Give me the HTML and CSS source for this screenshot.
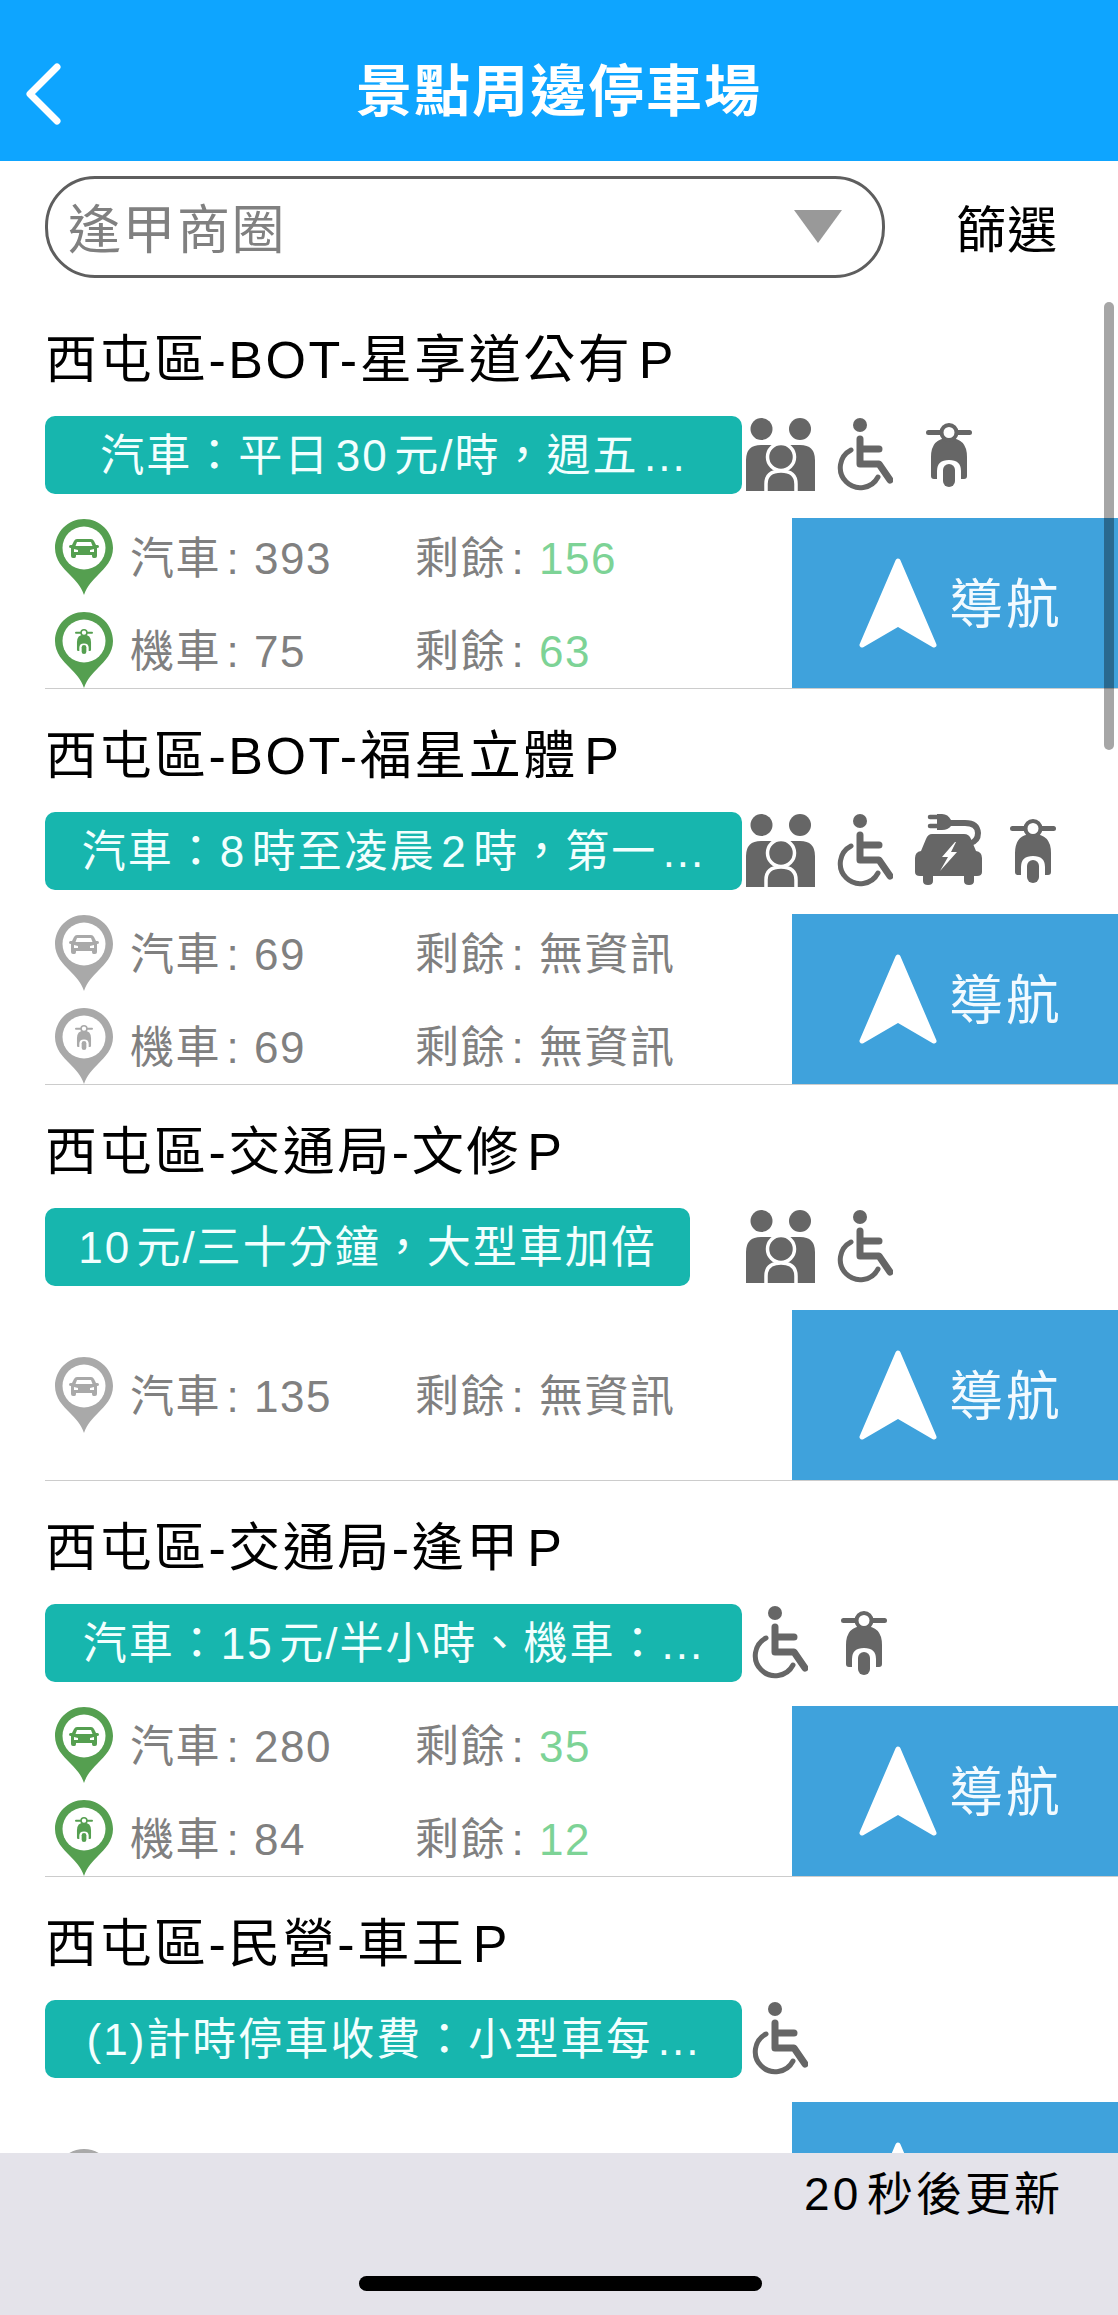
FILE: index.html
```html
<!DOCTYPE html>
<html lang="zh-Hant">
<head>
    <meta charset="UTF-8">
    <meta name="viewport" content="width=device-width, initial-scale=1.0">
    <title>景點周邊停車場</title>
    <link rel="stylesheet" href="styles.css">
</head>
<body>
    <svg class="defs" width="0" height="0" aria-hidden="true">
        <symbol id="i-family" viewBox="0 0 69 73">
            <circle cx="15.5" cy="11" r="11" fill="currentColor"/>
            <circle cx="54" cy="11" r="11" fill="currentColor"/>
            <path d="M0 73V42Q0 27 15 27H24Q32 27 32 34V73Z" fill="currentColor"/>
            <path d="M69 73V42Q69 27 54 27H45Q37 27 37 34V73Z" fill="currentColor"/>
            <circle cx="35" cy="39" r="13.5" fill="currentColor" stroke="#fff" stroke-width="3.5"/>
            <path d="M20 75V66Q20 53 35 53Q50 53 50 66V75Z" fill="currentColor" stroke="#fff" stroke-width="3.5"/>
        </symbol>
        <symbol id="i-wheelchair" viewBox="0 0 56 73">
            <circle cx="23" cy="7" r="7" fill="currentColor"/>
            <path d="M23 21V46H42L53 62M23 31H42" fill="none" stroke="currentColor" stroke-width="7" stroke-linecap="round" stroke-linejoin="round"/>
            <path d="M14 32A20 20 0 1 0 41 59" fill="none" stroke="currentColor" stroke-width="5" stroke-linecap="round"/>
        </symbol>
        <symbol id="i-scooter" viewBox="0 0 46 64">
            <path d="M2.500 9.500H43.500" stroke="currentColor" stroke-width="5" stroke-linecap="round"/>
            <path d="M5 53V34Q5 15 23 15Q41 15 41 34V53Q41 56 38 56H35V48Q35 37 23 37Q11 37 11 48V56H8Q5 56 5 53Z" fill="currentColor"/>
            <circle cx="23" cy="9.500" r="7.500" fill="#fff" stroke="currentColor" stroke-width="4"/>
            <rect x="17" y="41" width="12" height="23" rx="6" fill="currentColor"/>
        </symbol>
        <symbol id="i-ev" viewBox="0 0 67 71">
            <path d="M15 3H23M15 12H23" stroke="currentColor" stroke-width="4.500" stroke-linecap="round"/>
            <path d="M22 0H27Q33 0 36 6H50Q65 6 66 19Q66 29 56 32L54 27Q60 25 60 19Q60 12 50 12H36Q33 16 27 16H22Z" fill="currentColor"/>
            <path d="M17 20H49Q54 20 56 25L61 37Q67 38 67 44V58Q67 62 62 62H59V67Q59 71 54 71Q49 71 49 67V62H18V67Q18 71 13 71Q8 71 8 67V62H5Q0 62 0 58V44Q0 38 6 37L11 25Q13 20 17 20Z" fill="currentColor"/>
            <path d="M40 28L27 43H33L25 57L42 38H36L41 28Z" fill="#fff"/>
        </symbol>
        <symbol id="i-pin-car" viewBox="0 0 58 76">
            <path d="M29 0C13 0 0 13 0 29C0 41 8 49 15 56C20 61 26 67 29 76C32 67 38 61 43 56C50 49 58 41 58 29C58 13 45 0 29 0Z" fill="currentColor"/>
            <circle cx="29" cy="29" r="21.500" fill="#fff"/>
            <path d="M22 20H36Q38 20 39 22L41 26H42.500Q44 26 44 27.500Q44 29 42 29V37Q42 39 40 39H38.500Q37 39 37 37V36H21V37Q21 39 19.500 39H18Q16 39 16 37V29Q14 29 14 27.500Q14 26 15.500 26H17L19 22Q20 20 22 20ZM22 23L20.500 27H37.500L36 23ZM19 30V33H23V31ZM39 30L35 31V33H39Z" fill="currentColor" fill-rule="evenodd"/>
        </symbol>
        <symbol id="i-pin-moto" viewBox="0 0 58 76">
            <path d="M29 0C13 0 0 13 0 29C0 41 8 49 15 56C20 61 26 67 29 76C32 67 38 61 43 56C50 49 58 41 58 29C58 13 45 0 29 0Z" fill="currentColor"/>
            <circle cx="29" cy="29" r="21.500" fill="#fff"/>
            <use href="#i-scooter" x="20" y="17" width="18" height="25"/>
        </symbol>
    </svg>

    <div class="app">
        <header class="topbar">
            <svg class="back" viewBox="0 0 36 62" aria-hidden="true"><path d="M32 4L5 31L32 58" fill="none" stroke="#fff" stroke-width="7" stroke-linecap="round" stroke-linejoin="round"/></svg>
            <h1>景點周邊停車場</h1>
        </header>

        <div class="filter">
            <div class="select">
                <span>逢甲商圈</span>
                <i class="caret"></i>
            </div>
            <div class="filter-btn">篩選</div>
        </div>

        <main class="list">
            <section class="row">
                <h2>西屯區-BOT-星享道公有P</h2>
                <div class="info">
                    <div class="tag">汽車：平日30元/時，週五...</div>
                    <div class="icons">
                        <svg class="ico family"><use href="#i-family"/></svg>
                        <svg class="ico chair"><use href="#i-wheelchair"/></svg>
                        <svg class="ico scooter"><use href="#i-scooter"/></svg>
                    </div>
                </div>
                <div class="body">
                    <div class="details">
                        <div class="line">
                            <svg class="pin on"><use href="#i-pin-car"/></svg>
                            <span class="count">汽車: 393</span>
                            <span>剩餘: <b>156</b></span>
                        </div>
                        <div class="line">
                            <svg class="pin on"><use href="#i-pin-moto"/></svg>
                            <span class="count">機車: 75</span>
                            <span>剩餘: <b>63</b></span>
                        </div>
                    </div>
                    <div class="nav">
                        <svg class="arrow" viewBox="0 0 78 91" aria-hidden="true"><path d="M39 3L75 87L39 66L3 87Z" fill="#fff" stroke="#fff" stroke-width="5" stroke-linejoin="round"/></svg>
                        <span>導航</span>
                    </div>
                </div>
            </section>

            <section class="row">
                <h2>西屯區-BOT-福星立體P</h2>
                <div class="info">
                    <div class="tag">汽車：8時至凌晨2時，第一...</div>
                    <div class="icons">
                        <svg class="ico family"><use href="#i-family"/></svg>
                        <svg class="ico chair"><use href="#i-wheelchair"/></svg>
                        <svg class="ico ev"><use href="#i-ev"/></svg>
                        <svg class="ico scooter"><use href="#i-scooter"/></svg>
                    </div>
                </div>
                <div class="body">
                    <div class="details">
                        <div class="line">
                            <svg class="pin off"><use href="#i-pin-car"/></svg>
                            <span class="count">汽車: 69</span>
                            <span>剩餘: 無資訊</span>
                        </div>
                        <div class="line">
                            <svg class="pin off"><use href="#i-pin-moto"/></svg>
                            <span class="count">機車: 69</span>
                            <span>剩餘: 無資訊</span>
                        </div>
                    </div>
                    <div class="nav">
                        <svg class="arrow" viewBox="0 0 78 91" aria-hidden="true"><path d="M39 3L75 87L39 66L3 87Z" fill="#fff" stroke="#fff" stroke-width="5" stroke-linejoin="round"/></svg>
                        <span>導航</span>
                    </div>
                </div>
            </section>

            <section class="row">
                <h2>西屯區-交通局-文修P</h2>
                <div class="info">
                    <div class="tag short">10元/三十分鐘，大型車加倍</div>
                    <div class="icons">
                        <svg class="ico family"><use href="#i-family"/></svg>
                        <svg class="ico chair"><use href="#i-wheelchair"/></svg>
                    </div>
                </div>
                <div class="body">
                    <div class="details">
                        <div class="line">
                            <svg class="pin off"><use href="#i-pin-car"/></svg>
                            <span class="count">汽車: 135</span>
                            <span>剩餘: 無資訊</span>
                        </div>
                    </div>
                    <div class="nav">
                        <svg class="arrow" viewBox="0 0 78 91" aria-hidden="true"><path d="M39 3L75 87L39 66L3 87Z" fill="#fff" stroke="#fff" stroke-width="5" stroke-linejoin="round"/></svg>
                        <span>導航</span>
                    </div>
                </div>
            </section>

            <section class="row">
                <h2>西屯區-交通局-逢甲P</h2>
                <div class="info">
                    <div class="tag">汽車：15元/半小時、機車：...</div>
                    <div class="icons no-family">
                        <svg class="ico chair"><use href="#i-wheelchair"/></svg>
                        <svg class="ico scooter"><use href="#i-scooter"/></svg>
                    </div>
                </div>
                <div class="body">
                    <div class="details">
                        <div class="line">
                            <svg class="pin on"><use href="#i-pin-car"/></svg>
                            <span class="count">汽車: 280</span>
                            <span>剩餘: <b>35</b></span>
                        </div>
                        <div class="line">
                            <svg class="pin on"><use href="#i-pin-moto"/></svg>
                            <span class="count">機車: 84</span>
                            <span>剩餘: <b>12</b></span>
                        </div>
                    </div>
                    <div class="nav">
                        <svg class="arrow" viewBox="0 0 78 91" aria-hidden="true"><path d="M39 3L75 87L39 66L3 87Z" fill="#fff" stroke="#fff" stroke-width="5" stroke-linejoin="round"/></svg>
                        <span>導航</span>
                    </div>
                </div>
            </section>

            <section class="row">
                <h2>西屯區-民營-車王P</h2>
                <div class="info">
                    <div class="tag">(1)計時停車收費：小型車每...</div>
                    <div class="icons no-family">
                        <svg class="ico chair"><use href="#i-wheelchair"/></svg>
                    </div>
                </div>
                <div class="body">
                    <div class="details">
                        <div class="line">
                            <svg class="pin off"><use href="#i-pin-car"/></svg>
                        </div>
                    </div>
                    <div class="nav">
                        <svg class="arrow" viewBox="0 0 78 91" aria-hidden="true"><path d="M39 3L75 87L39 66L3 87Z" fill="#fff" stroke="#fff" stroke-width="5" stroke-linejoin="round"/></svg>
                    </div>
                </div>
            </section>

            <div class="scrollbar"></div>
        </main>

        <footer class="bottom">
            <div class="timer">20秒後更新</div>
            <div class="home-bar"></div>
        </footer>
    </div>
</body>
</html>
```

FILE: styles.css
```css
* {
    margin: 0;
    padding: 0;
    box-sizing: border-box;
}

body {
    font-family: "Liberation Sans", "Noto Sans CJK TC", sans-serif;
    text-autospace: normal;
    background: #fff;
}

.defs {
    position: absolute;
}

.app {
    display: flex;
    flex-direction: column;
    height: 2315px;
    overflow: hidden;
}

/* Top bar */
.topbar {
    position: relative;
    height: 161px;
    flex-shrink: 0;
    padding-top: 57px;
    background: #0ea5ff;
    text-align: center;
}

.topbar h1 {
    font-size: 56px;
    line-height: 70px;
    font-weight: 700;
    letter-spacing: 2px;
    color: #fff;
}

.back {
    position: absolute;
    left: 25px;
    top: 63px;
    width: 36px;
    height: 62px;
}

/* Filter */
.filter {
    display: flex;
    align-items: flex-start;
    height: 132px;
    flex-shrink: 0;
    padding: 15px 60px 0 45px;
}

.select {
    display: flex;
    align-items: center;
    justify-content: space-between;
    width: 840px;
    height: 102px;
    padding: 0 40px 2px 20px;
    border: 3px solid #5e5e5e;
    border-radius: 50px;
    font-size: 53px;
    letter-spacing: 1.500px;
    color: #808080;
}

.caret {
    width: 0;
    height: 0;
    border-left: 24px solid transparent;
    border-right: 24px solid transparent;
    border-top: 33px solid #999;
}

.filter-btn {
    margin-left: auto;
    padding-top: 4px;
    font-size: 50px;
    line-height: 102px;
    letter-spacing: 1px;
    color: #000;
}

/* Parking list */
.list {
    position: relative;
    flex: 1;
    overflow: hidden;
}

.row {
    height: 396px;
    margin-left: 45px;
    border-bottom: 1px solid #ccc;
}

.row h2 {
    height: 123px;
    font-size: 52px;
    line-height: 134px;
    font-weight: 400;
    letter-spacing: 2.500px;
    color: #000;
}

.info {
    display: flex;
    height: 102px;
}

.tag {
    width: 697px;
    height: 78px;
    flex-shrink: 0;
    margin-right: 4px;
    border-radius: 10px;
    background: #17b6ae;
    color: #f2fffe;
    font-size: 44px;
    line-height: 80px;
    letter-spacing: 2px;
    text-align: center;
    white-space: nowrap;
}

.tag.short {
    width: 645px;
    margin-right: 56px;
}

.icons {
    display: flex;
    align-items: flex-start;
    gap: 22px;
}

.icons.no-family {
    padding-left: 6px;
}

.ico {
    display: block;
    color: #666;
    margin-top: 2px;
}

.ico.family {
    width: 69px;
    height: 73px;
}

.ico.chair {
    width: 56px;
    height: 73px;
}

.ico.scooter {
    width: 46px;
    height: 64px;
    margin-top: 7px;
    margin-left: 11px;
}

.ico.ev {
    width: 67px;
    height: 71px;
}

.ico.ev + .scooter {
    margin-left: 6px;
}

.body {
    display: flex;
    height: 170px;
}

.details {
    flex: 1;
    display: flex;
    flex-direction: column;
    justify-content: center;
    gap: 17px;
    padding-left: 10px;
}

.line {
    display: flex;
    align-items: center;
    height: 76px;
    font-size: 44px;
    letter-spacing: 1.500px;
    color: #808080;
}

.line span {
    margin-top: -4px;
}

.pin {
    width: 58px;
    height: 76px;
    flex-shrink: 0;
    margin-right: 17px;
}

.pin.on {
    color: #559f50;
}

.pin.off {
    color: #a9a9a9;
}

.count {
    width: 285px;
}

.line b {
    font-weight: 400;
    color: #7dd396;
}

.nav {
    display: flex;
    align-items: center;
    width: 326px;
    flex-shrink: 0;
    padding-left: 67px;
    background: #3fa2dc;
    color: #f2faff;
    font-size: 54px;
    letter-spacing: 3px;
}

.nav span {
    margin-top: -5px;
}

.arrow {
    width: 78px;
    height: 91px;
    margin-right: 12px;
}

.scrollbar {
    position: absolute;
    top: 9px;
    right: 4px;
    width: 10px;
    height: 448px;
    border-radius: 5px;
    background: rgba(0, 0, 0, 0.35);
}

/* Bottom bar */
.bottom {
    position: relative;
    height: 162px;
    flex-shrink: 0;
    background: #e4e3ea;
}

.timer {
    padding: 9px 55px 0 0;
    font-size: 46px;
    line-height: 64px;
    letter-spacing: 3px;
    text-align: right;
    color: #000;
}

.home-bar {
    position: absolute;
    left: 359px;
    top: 123px;
    width: 403px;
    height: 15px;
    border-radius: 8px;
    background: #000;
}
```
